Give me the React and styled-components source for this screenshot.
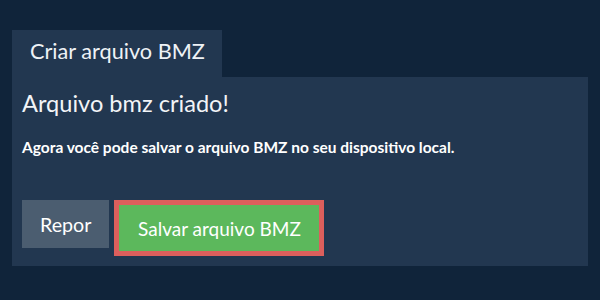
import React from "react";
import styled, { createGlobalStyle } from "styled-components";

const GlobalStyle = createGlobalStyle`
  html, body {
    margin: 0;
    padding: 0;
    background: #10243a;
  }
  body {
    font-family: Lato, "Noto Sans", sans-serif;
    color: #ffffff;
  }
`;

const Page = styled.div`
  width: 600px;
  height: 300px;
  box-sizing: border-box;
  padding: 30px 12px 0 12px;
`;

const TabBar = styled.div`
  display: flex;
`;

const Tab = styled.div`
  background: #223750;
  color: #eef2f6;
  font-size: 21.7px;
  height: 47px;
  line-height: 43px;
  padding: 0 17px 0 18px;
  box-sizing: border-box;
`;

const Panel = styled.div`
  background: #223750;
  height: 189px;
  box-sizing: border-box;
  padding: 12px 10px 0 10px;
`;

const Heading = styled.h2`
  margin: 0;
  font-size: 23.6px;
  font-weight: 400;
  line-height: 28px;
  color: #f2f4f7;
`;

const Message = styled.p`
  margin: 20px 0 0 0;
  font-size: 15.5px;
  font-weight: 700;
  line-height: 20px;
`;

const Actions = styled.div`
  display: flex;
  align-items: flex-start;
  gap: 5px;
  margin-top: 43px;
`;

const Button = styled.button`
  font-family: Lato, "Noto Sans", sans-serif;
  font-size: ${(p) => (p.$primary ? "19px" : "19.7px")};
  color: #ffffff;
  border: ${(p) => (p.$focused ? "5px solid #dc5f5c" : "none")};
  background: ${(p) => (p.$primary ? "#5cb85c" : "#4b5d70")};
  height: ${(p) => (p.$focused ? "56px" : "48px")};
  width: ${(p) => (p.$primary ? "210px" : "auto")};
  padding: 0 ${(p) => (p.$primary ? "0" : "18px")};
  box-sizing: border-box;
  cursor: pointer;
`;

export default function App() {
  return (
    <>
      <GlobalStyle />
      <Page>
        <TabBar>
          <Tab>Criar arquivo BMZ</Tab>
        </TabBar>
        <Panel>
          <Heading>Arquivo bmz criado!</Heading>
          <Message>Agora você pode salvar o arquivo BMZ no seu dispositivo local.</Message>
          <Actions>
            <Button>Repor</Button>
            <Button $primary $focused>Salvar arquivo BMZ</Button>
          </Actions>
        </Panel>
      </Page>
    </>
  );
}
